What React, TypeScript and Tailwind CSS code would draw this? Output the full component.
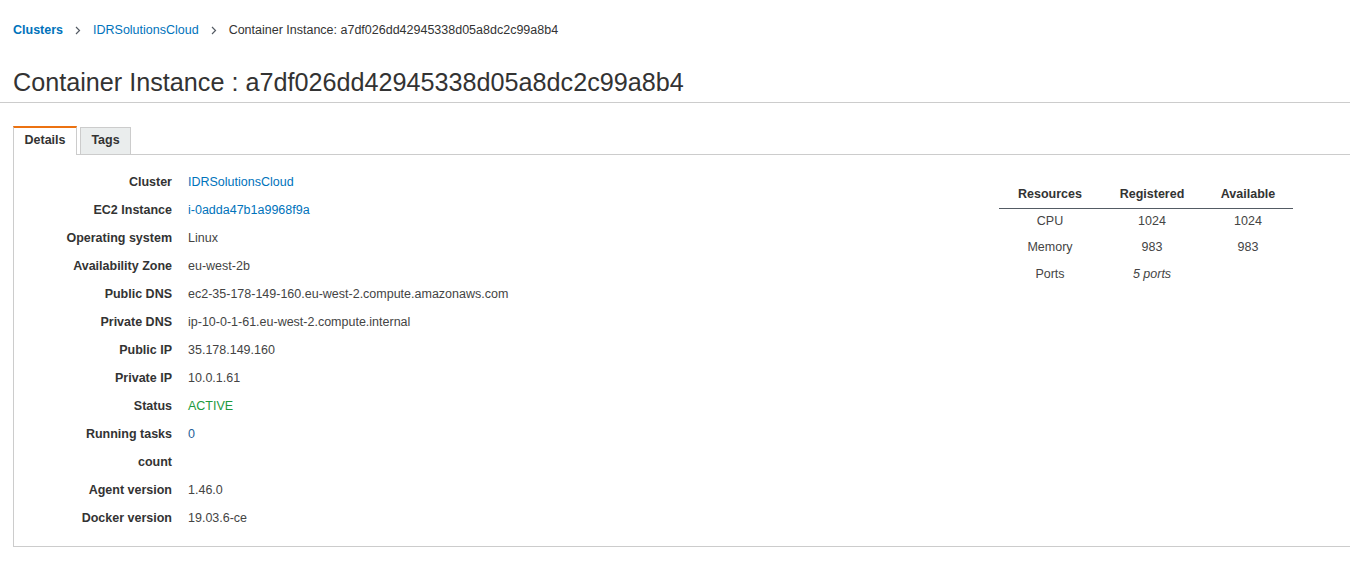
import React from "react";

const Chevron = () => (
  <svg width="6" height="9" viewBox="0 0 6 9" className="mx-[12px]" fill="none">
    <path d="M1 1l3.5 3.5L1 8" stroke="#545b64" strokeWidth="1.2" />
  </svg>
);

type Row = { label: React.ReactNode; value: React.ReactNode };

const rows: Row[] = [
  { label: "Cluster", value: <span className="text-[#0073bb]">IDRSolutionsCloud</span> },
  { label: "EC2 Instance", value: <span className="text-[#0073bb]">i-0adda47b1a9968f9a</span> },
  { label: "Operating system", value: "Linux" },
  { label: "Availability Zone", value: "eu-west-2b" },
  { label: "Public DNS", value: "ec2-35-178-149-160.eu-west-2.compute.amazonaws.com" },
  { label: "Private DNS", value: "ip-10-0-1-61.eu-west-2.compute.internal" },
  { label: "Public IP", value: "35.178.149.160" },
  { label: "Private IP", value: "10.0.1.61" },
  { label: "Status", value: <span className="text-[#1d9a3e]">ACTIVE</span> },
  {
    label: (
      <>
        Running tasks
        <br />
        count
      </>
    ),
    value: <span className="text-[#1f5f99]">0</span>,
  },
  { label: "Agent version", value: "1.46.0" },
  { label: "Docker version", value: "19.03.6-ce" },
];

export default function App() {
  return (
    <div className="w-[1350px] h-[565px] overflow-hidden bg-white font-['Liberation_Sans',Arial,sans-serif] text-[12.5px] text-[#444]">
      <nav className="flex items-center pl-[13px] pt-[22px] leading-[16px]">
        <span className="font-bold text-[#0073bb]">Clusters</span>
        <Chevron />
        <span className="text-[#0073bb]">IDRSolutionsCloud</span>
        <Chevron />
        <span className="text-[#333]">Container Instance: a7df026dd42945338d05a8dc2c99a8b4</span>
      </nav>

      <div className="mt-[29px] pb-[5px] border-b border-[#ccc]">
        <h1 className="pl-[13px] text-[25.2px] leading-[30px] text-[#333] font-normal">
          Container Instance : a7df026dd42945338d05a8dc2c99a8b4
        </h1>
      </div>

      <div className="mt-[23px] ml-[13px] flex items-end">
        <div className="relative z-10 -mb-px w-[64px] h-[29px] bg-white border-t-2 border-t-[#ec7211] border-x border-x-[#ccc] flex items-center justify-center font-bold text-[#333] pb-[3px]">
          Details
        </div>
        <div className="ml-[3px] w-[51px] h-[27px] bg-[#eaeded] border-t border-x border-[#ccc] flex items-center justify-center font-bold text-[#333] pb-[2px]">
          Tags
        </div>
      </div>

      <div className="ml-[13px] border-l border-t border-b border-[#ccc] pt-[13px] pb-[14px] flex">
        <div className="flex flex-col">
          {rows.map((r, i) => (
            <div key={i} className="flex leading-[28px]">
              <div className="w-[158px] text-right font-bold text-[#333]">{r.label}</div>
              <div className="pl-[16px]">{r.value}</div>
            </div>
          ))}
        </div>

        <div className="ml-auto mr-[57px] mt-[13px]">
          <table className="border-collapse text-center">
            <thead>
              <tr className="h-[27px] border-b border-[#545b64]">
                <th className="w-[102px] font-bold text-[#333] p-0">Resources</th>
                <th className="w-[102px] font-bold text-[#333] p-0">Registered</th>
                <th className="w-[90px] font-bold text-[#333] p-0">Available</th>
              </tr>
            </thead>
            <tbody>
              <tr className="h-[26px]">
                <td className="p-0 pt-[1px]">CPU</td>
                <td className="p-0 pt-[1px]">1024</td>
                <td className="p-0 pt-[1px]">1024</td>
              </tr>
              <tr className="h-[27px]">
                <td className="p-0">Memory</td>
                <td className="p-0">983</td>
                <td className="p-0">983</td>
              </tr>
              <tr className="h-[26px]">
                <td className="p-0">Ports</td>
                <td className="p-0 italic">5 ports</td>
                <td className="p-0"></td>
              </tr>
            </tbody>
          </table>
        </div>
      </div>
    </div>
  );
}
